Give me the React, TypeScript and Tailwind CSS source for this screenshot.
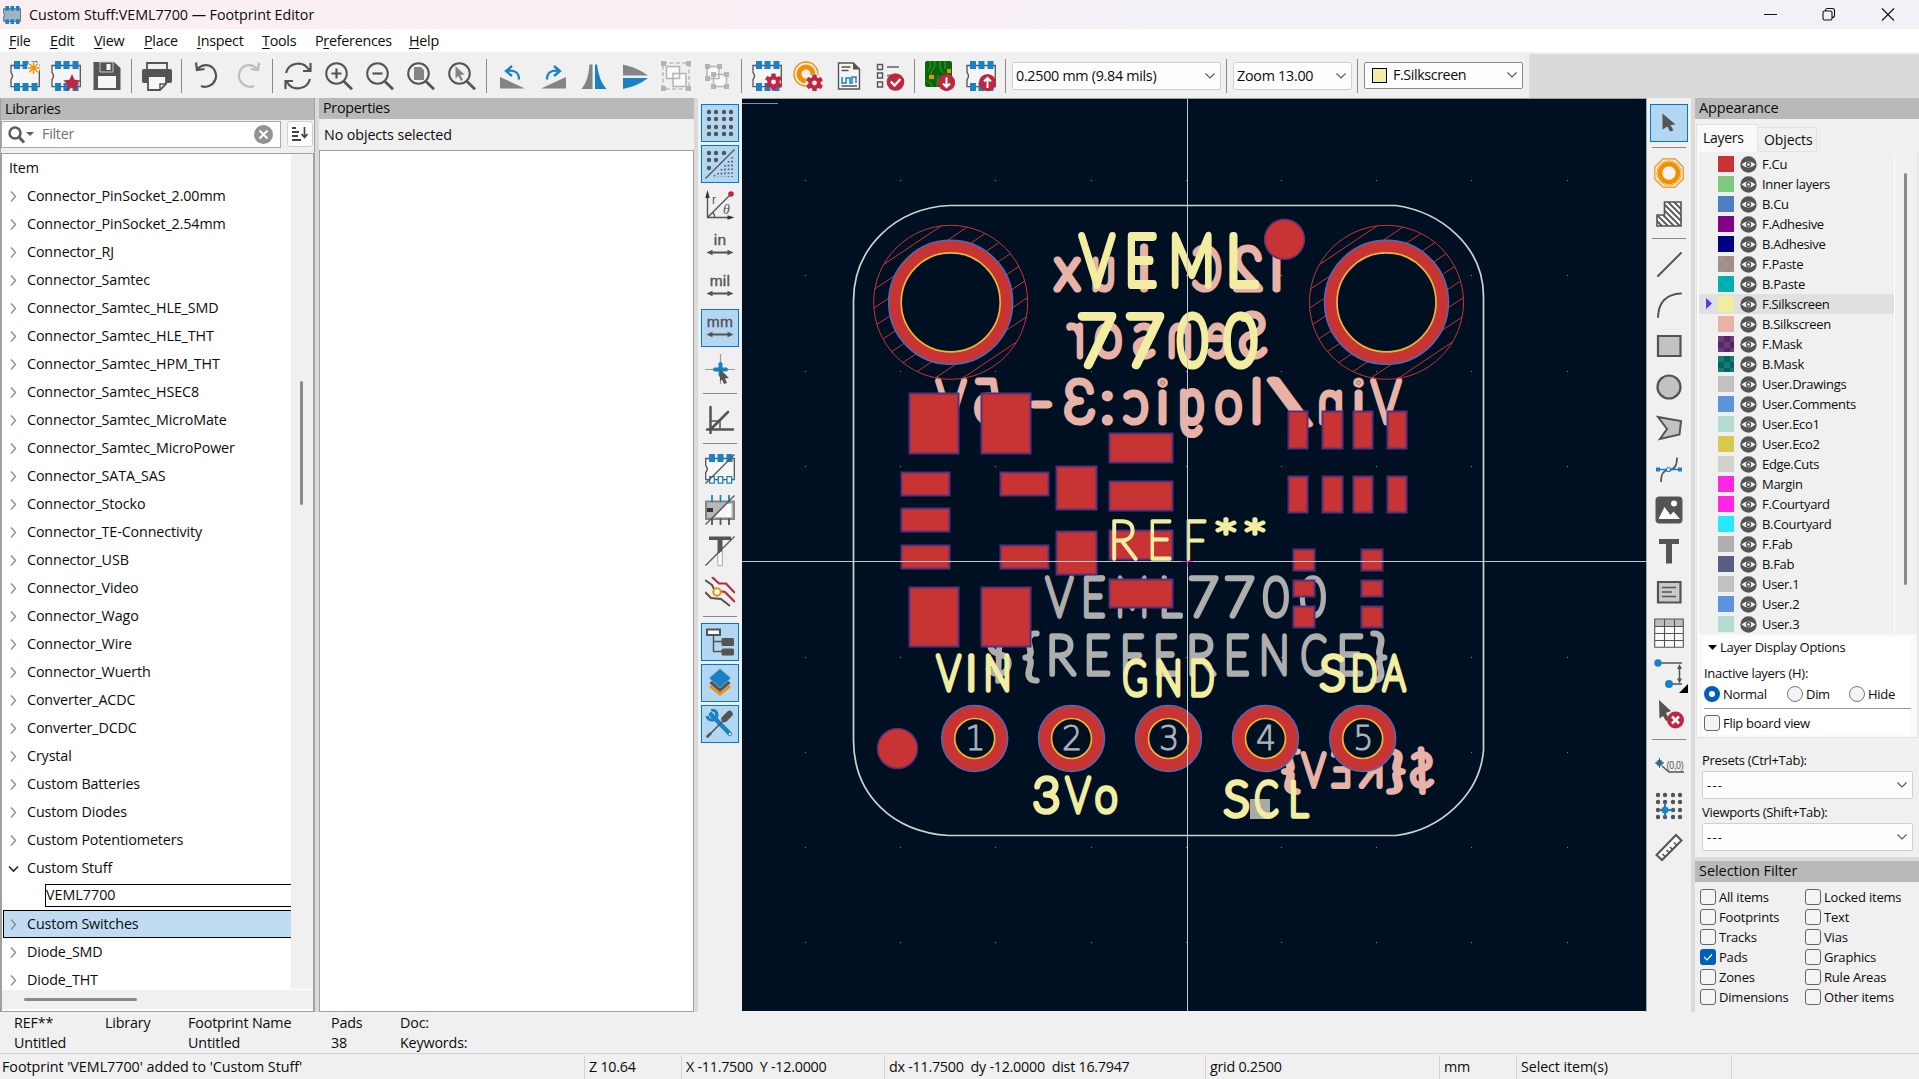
import React from 'react';

const BLUE = '#1a81c4';
const DARK = '#545454';
const GRAY = '#848484';
const RED = '#bf2641';
const ORANGE = '#f29100';

type Kids = { children?: React.ReactNode };

function Ico({ children, size = 30 }: Kids & { size?: number }) {
  return (
    <svg width={size} height={size} viewBox="0 0 30 30" fill="none" className="block shrink-0">
      {children}
    </svg>
  );
}

/* ---------- shared icon parts ---------- */

function Chip({ bottom = true, fill = '#f5f5f5' }: { bottom?: boolean; fill?: string }) {
  return (
    <>
      <path d="M1 4.5H29.3V25.7H1V18.5Q4 15 1 11.5Z" fill={fill} stroke={DARK} strokeWidth="1.3" />
      <path d="M4 0h6v8h-6zM12.5 0h6v8h-6zM21.5 0h6v8h-6z" fill={BLUE} />
      {bottom && <path d="M4 22h6v8h-6zM12.5 22h6v8h-6zM21.5 22h6v8h-6z" fill={BLUE} />}
    </>
  );
}

function Gear({ x, y }: { x: number; y: number }) {
  return (
    <g transform={`translate(${x} ${y})`}>
      {[0, 60, 120].map((a) => (
        <rect key={a} x="-2.2" y="-8.6" width="4.4" height="17.2" rx="1" fill={RED} transform={`rotate(${a})`} />
      ))}
      <circle r="6.2" fill={RED} />
      <circle r="2.4" fill="#f5f5f5" />
    </g>
  );
}

function Mag({ children }: Kids) {
  return (
    <Ico>
      <circle cx="12.5" cy="12.5" r="10.3" stroke={DARK} strokeWidth="2" />
      <path d="M20 20.5L28 28.3" stroke={DARK} strokeWidth="2.8" />
      {children}
    </Ico>
  );
}

/* ---------- top toolbar ---------- */

const Sep = () => (
  <div className="flex w-[9px] shrink-0 justify-center">
    <div className="h-[34px] w-px bg-[#8a8a8a]" />
  </div>
);
const Slot = ({ children }: Kids) => <div className="flex w-[41px] shrink-0 items-center justify-center">{children}</div>;

function Chevron() {
  return (
    <svg width="12" height="8" viewBox="0 0 12 8" fill="none" className="shrink-0">
      <path d="M1.5 1.5L6 6L10.5 1.5" stroke="#555" strokeWidth="1.1" />
    </svg>
  );
}

function TopToolbar() {
  return (
    <div className="flex h-[46px] shrink-0 bg-[#f0f0f0]">
      <div className="flex h-[46px] w-[1529px] items-center pt-[2px] pl-[4px]">
        <Slot>
          <Ico>
            <Chip />
            <circle cx="23.5" cy="7" r="6.5" fill="#f5f5f5" />
            <path d="M23.5 1v12M17.5 7h12M19.3 2.8l8.4 8.4M27.7 2.8l-8.4 8.4" stroke={ORANGE} strokeWidth="1.4" />
          </Ico>
        </Slot>
        <Slot>
          <Ico>
            <Chip />
            <path d="M21 13l2.6 5.8 6.2.6-4.7 4 1.4 6.4L21 26.500l-5.500 3.300 1.400-6.400-4.700-4 6.200-.6z" fill={RED} />
          </Ico>
        </Slot>
        <Slot>
          <Ico>
            <path d="M1.500 1H22L28.500 7V29H1.500Z" fill={DARK} />
            <path d="M8 1h13v10H8z" fill="#545454" stroke="#c8c8c8" strokeWidth="1" />
            <path d="M14.500 3h4v6h-4zM6 15h18v12H6z" fill="#f5f5f5" />
          </Ico>
        </Slot>
        <Sep />
        <Slot>
          <Ico>
            <path d="M5 2h20v7H5z" fill="#f0f0f0" stroke={DARK} strokeWidth="1.800" />
            <rect y="8" width="30" height="14" rx="2" fill={DARK} />
            <path d="M6 15h18v8L18 29H6z" fill="#f8f8f8" stroke={DARK} strokeWidth="1.800" />
            <path d="M18 29V23H24" stroke={DARK} strokeWidth="1.500" />
          </Ico>
        </Slot>
        <Sep />
        <Slot>
          <Ico>
            <path d="M4 1.500L5 9L12.500 8M5 8.500Q10 3 17 4.500A10.800 10.800 0 1 1 9 25" stroke={DARK} strokeWidth="2.200" />
          </Ico>
        </Slot>
        <Slot>
          <Ico>
            <path d="M26 1.500L25 9L17.500 8M25 8.500Q20 3 13 4.500A10.800 10.800 0 1 0 21 25" stroke="#bdbdbd" strokeWidth="2.200" />
          </Ico>
        </Slot>
        <Sep />
        <Slot>
          <Ico>
            <path d="M3 12A12.500 12.500 0 0 1 26 9M27.500 2V10H20M27 18A12.500 12.500 0 0 1 4 21M2.500 28V20H10" stroke={DARK} strokeWidth="2.200" />
          </Ico>
        </Slot>
        <Slot>
          <Mag>
            <path d="M12.500 7.500v10M7.500 12.500h10" stroke={DARK} strokeWidth="2.200" />
          </Mag>
        </Slot>
        <Slot>
          <Mag>
            <path d="M7.500 12.500h10" stroke={DARK} strokeWidth="2.200" />
          </Mag>
        </Slot>
        <Slot>
          <Mag>
            <path d="M8 6h7l3 3v10H8z" fill={GRAY} />
          </Mag>
        </Slot>
        <Slot>
          <Mag>
            <path d="M8.500 5L17.500 13.500L13.500 14L16 19L13.800 20L11.500 15L8.500 17.500Z" fill={GRAY} />
          </Mag>
        </Slot>
        <Sep />
        <Slot>
          <Ico>
            <path d="M3 16L28 27.500H3Z" fill={GRAY} />
            <path d="M15 5L9 10L15 15M9.500 10Q22 8 22 18.500" stroke={BLUE} strokeWidth="2.300" />
          </Ico>
        </Slot>
        <Slot>
          <Ico>
            <path d="M28 16L3 27.500H28Z" fill={GRAY} />
            <path d="M16 5L22 10L16 15M21.500 10Q9 8 9 18.500" stroke={BLUE} strokeWidth="2.300" />
          </Ico>
        </Slot>
        <Slot>
          <Ico>
            <path d="M13.500 3.500V28H2.500Q9.500 20 10.500 3.500Z" fill={GRAY} />
            <path d="M16 3.500V28H27.500Q20 20 18 3.500Z" fill={BLUE} />
          </Ico>
        </Slot>
        <Slot>
          <Ico>
            <path d="M3 3.500V14.500H28Q18 7 3 3.500Z" fill={GRAY} />
            <path d="M3 28V17H28Q18 25 3 28Z" fill={BLUE} />
          </Ico>
        </Slot>
        <Slot>
          <Ico>
            <path d="M2 2H28V28H2Z" stroke="#b9b9b9" strokeWidth="1.500" strokeDasharray="4 2.500" />
            <path d="M0 0h5v5h-5zM25 0h5v5h-5zM0 25h5v5h-5zM25 25h5v5h-5z" fill="#b4b4b4" />
            <path d="M5.500 5.500h13v12h-13zM12 12.500h13v13h-13z" fill="#fafafa" stroke="#b4b4b4" strokeWidth="1.500" />
          </Ico>
        </Slot>
        <Slot>
          <Ico>
            <path d="M5 5.500h12v12h-12zM11.500 13.500h13v12h-13z" fill="#fafafa" stroke="#b4b4b4" strokeWidth="1.500" />
            <path d="M3 3h5v5h-5zM15 3h5v5h-5zM3 15h5v5h-5zM9 11h5v5h-5zM22 11h5v5h-5zM9 23h5v5h-5zM22 23h5v5h-5z" fill="#b4b4b4" />
          </Ico>
        </Slot>
        <Sep />
        <Slot>
          <Ico>
            <Chip />
            <Gear x={21.500} y={21} />
          </Ico>
        </Slot>
        <Slot>
          <Ico>
            <circle cx="13" cy="13" r="12" stroke={ORANGE} strokeWidth="1.400" />
            <circle cx="13" cy="13" r="7" stroke={ORANGE} strokeWidth="5" />
            <circle cx="21.500" cy="22" r="9" fill="#f0f0f0" />
            <Gear x={21.500} y={22} />
          </Ico>
        </Slot>
        <Slot>
          <Ico>
            <path d="M4.500 2H19.500L25.500 8V28H4.500Z" fill="#f5f5f5" stroke={DARK} strokeWidth="1.400" />
            <path d="M19 2V8.500H25.500Z" fill={DARK} />
            <path d="M7.500 6h9M7.500 9.500h7M7.500 25h15.500" stroke={DARK} strokeWidth="1.300" />
            <path d="M8 16v6h4v-5h4v5h2v-6h4v6" stroke={BLUE} strokeWidth="1.500" />
          </Ico>
        </Slot>
        <Slot>
          <Ico>
            <path d="M2.500 3.500h5v5h-5zM2.500 12h5v5h-5zM2.500 21h5v5h-5z" stroke={DARK} strokeWidth="1.400" />
            <path d="M12 6h12M12 14.500h6M12 23h4" stroke={GRAY} strokeWidth="2.200" />
            <circle cx="20.500" cy="21" r="8.800" fill={RED} />
            <path d="M15.800 20.500L19.500 24.500L25.500 18" stroke="#fff" strokeWidth="2.300" />
          </Ico>
        </Slot>
        <Sep />
        <Slot>
          <Ico>
            <rect width="27" height="26" rx="2" fill="#08660c" />
            <path d="M5 0Q7 6 3 10M10 0Q10 6 7 10T9 18M15 0Q14 7 18 12M20 0L20 8M0 20Q6 20 7 26M13 14L12 26" stroke="#3c8c30" strokeWidth="1.200" />
            <path d="M4 14h5v4h-5zM22 8h4v4h-4z" fill={ORANGE} />
            <circle cx="21.500" cy="21.500" r="8.600" fill={RED} />
            <path d="M21.500 16.500V25.500M18 22.500L21.500 26L25 22.500" stroke="#fff" strokeWidth="2" />
          </Ico>
        </Slot>
        <Slot>
          <Ico>
            <Chip />
            <circle cx="21.500" cy="21.500" r="8.600" fill={RED} />
            <path d="M21.500 27V17.500M18 20.500L21.500 17L25 20.500" stroke="#fff" strokeWidth="2" />
          </Ico>
        </Slot>
        <Sep />
        <div className="ml-[2px] flex h-[28px] w-[209px] items-center justify-between rounded-[2px] border border-[#d0d0d0] bg-[#fdfdfd] pr-[4px] pl-[3px] tracking-[-0.28px]">
          0.2500 mm (9.84 mils)
          <Chevron />
        </div>
        <div className="ml-px">
          <Sep />
        </div>
        <div className="ml-[2px] flex h-[28px] w-[119px] items-center justify-between rounded-[2px] border border-[#d0d0d0] bg-[#fdfdfd] pr-[4px] pl-[3px]">
          Zoom 13.00
          <Chevron />
        </div>
        <div className="ml-px">
          <Sep />
        </div>
        <div className="mb-[2px] ml-[2px] flex h-[27px] w-[159px] items-center rounded-[2px] border border-[#8a8a8a] bg-[#fdfdfd] pr-[4px] pl-[7px]">
          <div className="mr-[6px] size-[15px] border border-black bg-[#f2eda1]" />
          <span className="flex-1 tracking-[-0.4px]">F.Silkscreen</span>
          <Chevron />
        </div>
      </div>
      <div className="mt-[2px] flex-1 bg-[#dadada]" />
    </div>
  );
}

/* ---------- side toolbars ---------- */

const HSep = () => (
  <div className="flex h-[9px] shrink-0 items-center justify-center">
    <div className="h-px w-[34px] bg-[#8a8a8a]" />
  </div>
);
function VSlot({ on, children }: Kids & { on?: boolean }) {
  return (
    <div className="flex h-[41px] shrink-0 items-center justify-center">
      <div className={on ? 'flex size-[38px] items-center justify-center border border-[#0078d7] bg-[#b3d7f3]' : 'flex size-[38px] items-center justify-center'}>
        <Ico>{children}</Ico>
      </div>
    </div>
  );
}

const GP = [4, 11, 19, 26];
function Unit({ t }: { t: string }) {
  return (
    <>
      <text x="15" y="14" textAnchor="middle" fontFamily="Liberation Sans" fontSize="15.500" letterSpacing="0.300" fill={DARK} stroke={DARK} strokeWidth="0.400">
        {t}
      </text>
      <path d="M4 21.500h22" stroke={DARK} strokeWidth="2" />
      <path d="M1.500 21.500l6-2.800v5.600zM28.500 21.500l-6-2.800v5.600z" fill={DARK} />
    </>
  );
}
const Slash = () => <path d="M0.500 29.500L29.500 0.500" stroke={DARK} strokeWidth="1.300" />;

function LeftToolbar() {
  return (
    <div className="w-[44px] shrink-0 bg-[#f0f0f0] pt-[4px]">
      <VSlot on>{GP.map((y) => GP.map((x) => <circle key={x + '-' + y} cx={x} cy={y} r="2.200" fill={DARK} />))}</VSlot>
      <VSlot on>
        {[[4, 4], [11, 4], [19, 4], [4, 11], [11, 11], [4, 19]].map(([x, y]) => (
          <circle key={x + '-' + y} cx={x} cy={y} r="2.200" fill={DARK} />
        ))}
        <path d="M27 8v20M23.500 12v16M20 16v12M16.500 20v8M13 24v4M9.500 26v2" stroke={DARK} strokeWidth="1.600" strokeDasharray="1.600 2.200" />
        <Slash />
      </VSlot>
      <VSlot>
        <path d="M2.500 28V4M2 27.500H26M2.500 27.500L25 5M7 22Q10 24 9.500 27.500" stroke={DARK} strokeWidth="1.400" />
        <path d="M2.500 0l2.200 8h-4.400zM29.500 27.500l-7-2.200v4.400z" fill="#333" />
        <circle cx="26" cy="4" r="2.800" fill={RED} />
        <text x="7" y="14" fontFamily="Liberation Sans" fontSize="12" fill={DARK}>r</text>
        <text x="18" y="23.500" fontFamily="Liberation Serif" fontStyle="italic" fontSize="14" fill={DARK}>θ</text>
      </VSlot>
      <VSlot><Unit t="in" /></VSlot>
      <VSlot><Unit t="mil" /></VSlot>
      <VSlot on><Unit t="mm" /></VSlot>
      <VSlot>
        <path d="M0 15.500H30M15.500 0V30" stroke="#9a9a9a" strokeWidth="1.200" />
        <path d="M15.500 10V21M10 15.500H21" stroke={BLUE} strokeWidth="4" strokeLinecap="round" />
        <path d="M15 15L24 24L20 24.500L22 29L19 30L17 25.500L15 27.500Z" fill={DARK} />
      </VSlot>
      <HSep />
      <VSlot>
        <path d="M5.500 3V29M2 25.500H28M5.500 25.500L23 8" stroke={DARK} strokeWidth="2.500" strokeLinecap="round" />
        <path d="M6 17H15V25" stroke={DARK} strokeWidth="1.500" />
      </VSlot>
      <HSep />
      <VSlot>
        <path d="M0.700 4.500H29.300V25.700H0.700V18.500Q4 15 0.700 11.500Z" fill="#f7f7f7" stroke={DARK} strokeWidth="1.300" />
        <path d="M4 0h6v8h-6zM12.500 0h6v8h-6zM21.500 0h6v8h-6z" fill={BLUE} />
        <path d="M4.700 22.700h4.600v6.500h-4.600zM13.200 22.700h4.600v6.500h-4.600zM22 22.700h4.600v6.500h-4.600z" fill="#fff" stroke={BLUE} strokeWidth="1.300" />
        <Slash />
      </VSlot>
      <VSlot>
        <path d="M1 6.500H29V24H1Z" fill="#b8b8b8" stroke={GRAY} strokeWidth="2" />
        <path d="M22 9H26.500V22H10Z" fill="#f8f8f8" />
        <path d="M2 13h6v4H2z" fill="#333" />
        <path d="M7 0v7M15.500 0v7M24 0v7" stroke={BLUE} strokeWidth="1.800" />
        <path d="M7 23v7M15.500 23v7M24 23v7" stroke={DARK} strokeWidth="1.800" />
        <Slash />
      </VSlot>
      <VSlot>
        <path d="M4 0.500h22v3.500h-8.500v11l-5 4.500V4H4z" fill={DARK} />
        <path d="M12.800 18v11.500h4.600V15" fill="#fafafa" stroke="#aaa" strokeWidth="1" />
        <Slash />
      </VSlot>
      <VSlot>
        <path d="M0 3L7 8L10 14L14 18" stroke={DARK} strokeWidth="2" />
        <path d="M0 15L6 21L16 22L25 29" stroke={DARK} strokeWidth="2" />
        <path d="M7 0L14 6.500H21L30 16M14 14L20 15L30 25" stroke={RED} strokeWidth="2.200" />
        <circle cx="12" cy="15" r="3.700" fill="#fff" stroke={ORANGE} strokeWidth="2" />
      </VSlot>
      <HSep />
      <VSlot on>
        <path d="M8.500 8V24.500H18M8.500 14.500H18" stroke={DARK} strokeWidth="1.500" />
        <path d="M2 2.500H15V8H2Z" fill="#fff" stroke={DARK} strokeWidth="2" />
        <rect x="16.500" y="11" width="12.500" height="8" rx="1.500" fill={DARK} />
        <rect x="16.500" y="21.500" width="12.500" height="7" rx="1.500" fill={DARK} />
      </VSlot>
      <VSlot on>
        <path d="M4 19L15 28L26 19L15 10Z" fill={ORANGE} />
        <path d="M4 15L15 24.500L26 15L15 6Z" fill={DARK} stroke="#b3d7f3" strokeWidth="0.500" />
        <path d="M4 10L15 20L26 10L15 0.500Z" fill={BLUE} stroke="#b3d7f3" strokeWidth="0.500" />
      </VSlot>
      <VSlot on>
        <path d="M6 5.500L25 25" stroke={BLUE} strokeWidth="4.500" strokeLinecap="round" />
        <path d="M6 1A5 5 0 1 1 2 7" stroke={BLUE} strokeWidth="3.200" />
        <circle cx="25" cy="25" r="1.200" fill="#fff" />
        <path d="M1.500 28.500L18 12" stroke={DARK} strokeWidth="1.600" />
        <path d="M2 28L6 24" stroke={DARK} strokeWidth="2.500" />
        <path d="M19.500 10L24.500 5" stroke={DARK} strokeWidth="6.500" strokeLinecap="round" />
      </VSlot>
    </div>
  );
}

function RightToolbar() {
  return (
    <div className="w-[45px] shrink-0 border-l border-[#a8a8a8] bg-[#f0f0f0] pt-[4px]">
      <VSlot on>
        <path d="M8.500 5.500L21.500 16.500L16.500 17L19.500 22.500L16 23.500L13.500 18.500L8.500 21.500Z" fill={DARK} />
      </VSlot>
      <HSep />
      <VSlot>
        <path d="M9 0.800h12l8.200 8.200v12L21 29.200H9L0.800 21V9Z" stroke={ORANGE} strokeWidth="1.200" />
        <circle cx="15" cy="15" r="12.200" stroke={ORANGE} strokeWidth="0.800" />
        <circle cx="15" cy="15" r="9" fill="#f4f4f4" stroke={ORANGE} strokeWidth="4.600" />
      </VSlot>
      <VSlot>
        <clipPath id="zoneClip"><path d="M10.500 3H27V27H3V16H10.500Z" /></clipPath>
        <path d="M10.500 3H27V27H3V16H10.500Z" fill="#f8f8f8" />
        <path clipPath="url(#zoneClip)" d="M8 -3L34 23M3 -2L32 27M-2 -1L28 29M-2 5L22 29M-2 11L16 29M-2 17L10 29M-2 23L4 29M13 -4L39 22" stroke={DARK} strokeWidth="1.900" />
        <path d="M10.500 3H27V27H3V16H10.500Z" stroke={DARK} strokeWidth="1.600" />
      </VSlot>
      <HSep />
      <VSlot><path d="M4 27L27 4" stroke={DARK} strokeWidth="2" strokeLinecap="round" /></VSlot>
      <VSlot><path d="M4 27Q5 4.500 27 3.500" stroke={DARK} strokeWidth="2" strokeLinecap="round" /></VSlot>
      <VSlot><path d="M4 5H26.500V25H4Z" fill="#c2c2c2" stroke={DARK} strokeWidth="2.200" /></VSlot>
      <VSlot><circle cx="15" cy="15" r="11.500" fill="#c2c2c2" stroke={DARK} strokeWidth="2.200" /></VSlot>
      <VSlot><path d="M4 4L27 8L25.500 21.500L6 26L13 16Z" fill="#c2c2c2" stroke={DARK} strokeWidth="2" /></VSlot>
      <VSlot>
        <path d="M7 28Q7 16 15 16T23 3.500" stroke={DARK} strokeWidth="1.700" />
        <path d="M3 15.500H27" stroke={BLUE} strokeWidth="1.500" />
        <path d="M2 13.500h4v4h-4zM24 13.500h4v4h-4z" fill={BLUE} />
        <circle cx="14.500" cy="15.500" r="2" fill="#fff" stroke={BLUE} strokeWidth="1.200" />
      </VSlot>
      <VSlot>
        <rect x="1.500" y="1.500" width="27" height="27" rx="4" fill={DARK} />
        <path d="M4.500 24L10.500 12L16.500 20L19.500 16.500L26 24Z" fill="#fff" />
        <circle cx="20" cy="8.500" r="3" fill="#fff" />
      </VSlot>
      <VSlot><path d="M5 3h20v5h-7v19.500h-6V8H5z" fill={DARK} /></VSlot>
      <VSlot>
        <path d="M4 5H26.500V25.500H4Z" fill="#c8c8c8" stroke={DARK} strokeWidth="2.200" />
        <path d="M8 10.500h14M8 15h10M8 19.500h14" stroke={DARK} strokeWidth="1.500" />
      </VSlot>
      <VSlot>
        <path d="M0.700 1h28.600v28H0.700z" fill="#fafafa" />
        <path d="M0.700 1h28.600v7.500H0.700z" fill="#bdbdbd" />
        <path d="M0.700 1h28.600v28.300H0.700zM0.700 15.500H29M0.700 8.500H29M0.700 22.500H29M10.500 1V29M20.500 1V29" stroke={DARK} strokeWidth="1.100" />
      </VSlot>
      <div className="relative">
        <VSlot>
          <path d="M4 4H28M15 25H28" stroke={DARK} strokeWidth="1.500" />
          <path d="M25.500 8V22" stroke={DARK} strokeWidth="1.500" />
          <path d="M25.500 5l2.500 5h-5zM25.500 24.500l2.500-5h-5z" fill={DARK} />
          <circle cx="4" cy="4" r="3.700" fill={BLUE} />
          <circle cx="15" cy="25" r="4" fill={BLUE} />
        </VSlot>
        <svg width="9" height="9" className="absolute right-[3px] bottom-[1px]"><path d="M9 0V9H0Z" fill="#000" /></svg>
      </div>
      <VSlot>
        <path d="M5 0L17 11L12 13L15 19L12 21L9 16L5.500 18.500Z" fill={DARK} />
        <circle cx="21.500" cy="20" r="8.500" fill={RED} />
        <path d="M18 16.500L25 23.500M25 16.500L18 23.500" stroke="#fff" strokeWidth="2.500" />
      </VSlot>
      <HSep />
      <VSlot>
        <circle cx="5.500" cy="13" r="2.800" fill={BLUE} stroke={BLUE} />
        <path d="M5.500 8V18M1 13H10" stroke={DARK} strokeWidth="1" />
        <path d="M8 16L15 22H30" stroke={DARK} strokeWidth="1.500" />
        <text x="12.500" y="18.500" fontFamily="Liberation Sans" fontSize="10" textLength="17" lengthAdjust="spacingAndGlyphs" fill={DARK}>(0,0)</text>
      </VSlot>
      <VSlot>
        {GP.map((y) => GP.map((x) => <circle key={x + '-' + y} cx={x} cy={y} r="2.200" fill={DARK} />))}
        <path d="M11 12V26M4.500 19H19" stroke={BLUE} strokeWidth="2" />
        <circle cx="11" cy="19" r="3.500" fill={BLUE} />
      </VSlot>
      <VSlot>
        <path d="M2.500 23L22 3L27.500 8.500L8 28Z" fill="#fafafa" stroke={DARK} strokeWidth="2" />
        <path d="M11 24.500L8.500 22M14.500 20L12.500 18M18.500 17.500L16 15M22.500 13L20 10.500" stroke={DARK} strokeWidth="1.600" />
      </VSlot>
    </div>
  );
}

/* ---------- libraries ---------- */

const LIBS = [
  'Connector_PinSocket_2.00mm', 'Connector_PinSocket_2.54mm', 'Connector_RJ', 'Connector_Samtec', 'Connector_Samtec_HLE_SMD',
  'Connector_Samtec_HLE_THT', 'Connector_Samtec_HPM_THT', 'Connector_Samtec_HSEC8', 'Connector_Samtec_MicroMate',
  'Connector_Samtec_MicroPower', 'Connector_SATA_SAS', 'Connector_Stocko', 'Connector_TE-Connectivity', 'Connector_USB',
  'Connector_Video', 'Connector_Wago', 'Connector_Wire', 'Connector_Wuerth', 'Converter_ACDC', 'Converter_DCDC', 'Crystal',
  'Custom Batteries', 'Custom Diodes', 'Custom Potentiometers', 'Custom Stuff', 'VEML7700', 'Custom Switches', 'Diode_SMD', 'Diode_THT',
];

function LibRow({ name }: { name: string }) {
  if (name === 'VEML7700')
    return (
      <div className="flex h-[28px] shrink-0 items-center pb-px pl-[43px]">
        <div className="flex h-[23px] flex-1 items-center border border-r-0 border-black tracking-[0px]">{name}</div>
      </div>
    );
  const open = name === 'Custom Stuff';
  const sel = name === 'Custom Switches';
  return (
    <div className={sel ? 'ml-px flex h-[28px] shrink-0 items-center border border-r-0 border-black bg-[#bfdcf2] pl-[4px]' : 'flex h-[28px] shrink-0 items-center pl-[6px]'}>
      <svg width="11" height="11" viewBox="0 0 11 11" fill="none" className="mr-[8px]">
        {open ? <path d="M1 3.500L5.500 8L10 3.500" stroke="#222" strokeWidth="1.600" /> : <path d="M3 0.500L7.500 5.500L3 10.500" stroke="#8a8a8a" strokeWidth="1.300" />}
      </svg>
      {name}
    </div>
  );
}

function Libraries() {
  return (
    <div className="flex w-[315px] shrink-0 flex-col border-x border-[#a0a0a0] bg-[#f0f0f0]">
      <div className="flex h-[22px] shrink-0 items-center bg-[#b9b9b9] pl-[4px]">Libraries</div>
      <div className="flex h-[33px] shrink-0 pt-px">
        <div className="flex h-[27px] w-[280px] items-center border border-[#a8a8a8] bg-white pr-[7px] pl-[6px]">
          <svg width="28" height="20" viewBox="0 0 28 20" fill="none">
            <circle cx="7" cy="8" r="5.500" stroke="#5c5c5c" strokeWidth="2.500" />
            <path d="M11 12L16 17.500" stroke="#5c5c5c" strokeWidth="3" />
            <path d="M18 7h8l-4 4z" fill="#5c5c5c" />
          </svg>
          <span className="ml-[6px] flex-1 text-[#707070]">Filter</span>
          <svg width="19" height="19" viewBox="0 0 19 19">
            <circle cx="9.500" cy="9.500" r="9.500" fill="#929292" />
            <path d="M5.500 5.500L13.500 13.500M13.500 5.500L5.500 13.500" stroke="#fff" strokeWidth="2" />
          </svg>
        </div>
        <div className="ml-[6px] flex size-[26px] items-center justify-center rounded-[3px] border border-[#cfcfcf] bg-[#fdfdfd]">
          <svg width="16" height="16" viewBox="0 0 16 16" fill="none">
            <path d="M0 2h4M0 6h7M0 10h6M0 14h9" stroke="#444" strokeWidth="2" />
            <path d="M12.500 1V11M9.500 8L12.500 11.500L15.500 8" stroke="#444" strokeWidth="1.700" />
          </svg>
        </div>
      </div>
      <div className="flex min-h-0 flex-1 flex-col border border-[#a0a0a0] bg-white">
        <div className="flex min-h-0 flex-1">
          <div className="flex w-[289px] flex-col overflow-hidden tracking-[-0.12px]">
            <div className="flex h-[28px] shrink-0 items-center pt-px pl-[7px]">Item</div>
            {LIBS.map((n) => <LibRow key={n} name={n} />)}
          </div>
          <div className="flex-1 bg-[#f0f0f0] pt-[227px] pl-[9px]">
            <div className="h-[124px] w-[3px] rounded bg-[#8a8a8a]" />
          </div>
        </div>
        <div className="mt-px mb-[2px] flex h-[19px] shrink-0 items-center bg-[#f0f0f0] pl-[22px]">
          <div className="h-[3px] w-[113px] rounded bg-[#8a8a8a]" />
        </div>
      </div>
    </div>
  );
}

function Properties() {
  return (
    <div className="flex w-[375px] shrink-0 flex-col bg-[#f0f0f0]">
      <div className="flex h-[21px] shrink-0 items-center bg-[#b9b9b9] pl-[4px]">Properties</div>
      <div className="flex h-[31px] shrink-0 items-center pt-[2px] pl-[5px] tracking-[-0.1px]">No objects selected</div>
      <div className="flex-1 border border-[#a0a0a0] bg-white" />
    </div>
  );
}

/* ---------- board canvas ---------- */

let probe: CanvasRenderingContext2D | null = null;
const face = (ch: string) => (ch === 'g' ? 'Roboto' : 'Lato');
function ink(ch: string, size: number) {
  if (!probe) probe = document.createElement('canvas').getContext('2d');
  probe!.font = `100 ${size}px ${face(ch)}`;
  const m = probe!.measureText(ch);
  return { l: -m.actualBoundingBoxLeft, r: m.actualBoundingBoxRight, a: m.actualBoundingBoxAscent };
}

type Cell = [string, number, number];

/* A line of board lettering; each character is fitted between its own left and right edge. */
function Lettering({ cells, top, bottom, w, color, mirror }: { cells: Cell[]; top: number; bottom: number; w: number; color: string; mirror?: boolean }) {
  const capH = bottom - top - w;
  const size = (capH / ink('H', 100).a) * 100;
  return (
    <>
      {cells.map(([ch, x0, x1], i) => {
        const b = ink(ch, size);
        const narrow = 'Iil:'.includes(ch);
        const s = narrow ? 1 : Math.max(0.3, (x1 - x0 - w) / (b.r - b.l));
        const sx = mirror ? -s : s;
        const tx = (x0 + x1) / 2 - (sx * (b.l + b.r)) / 2;
        return (
          <text
            key={i}
            transform={`matrix(${sx} 0 0 1 ${tx} ${bottom - w / 2})`}
            fontFamily={face(ch)}
            fontWeight="100"
            fontSize={size}
            fill={color}
            stroke={color}
            strokeWidth={w * 1.03}
            strokeLinejoin="round"
            strokeLinecap="round"
          >
            {ch}
          </text>
        );
      })}
    </>
  );
}

const YEL = '#f2eda1';
const PINK = '#e8b2a7';
const FAB = '#aeaeae';

const PADS: [number, number, number, number][] = [
  [909, 393, 50, 61], [981, 393, 50, 61], [901, 472, 49, 24], [1000, 472, 49, 24], [1056, 466, 41, 44],
  [1109, 433, 64, 30], [1109, 481, 64, 30], [901, 508, 49, 24], [901, 545, 49, 24], [1000, 545, 49, 24],
  [1056, 531, 41, 44], [1109, 530, 64, 30], [1109, 579, 64, 29], [909, 587, 50, 60], [981, 587, 50, 60],
  [1293, 549, 22, 22], [1293, 580, 22, 17], [1293, 606, 22, 22], [1361, 549, 22, 22], [1361, 580, 22, 17], [1361, 606, 22, 22],
  [1288, 411, 20, 38], [1322, 411, 21, 38], [1353, 411, 20, 38], [1387, 411, 20, 38],
  [1288, 476, 20, 37], [1322, 476, 21, 37], [1353, 476, 20, 37], [1387, 476, 20, 37],
];

function Mount({ cx, id }: { cx: number; id: string }) {
  const cy = 302.300;
  const lines: number[] = [];
  for (let k = -6; k <= 6; k++) lines.push(-8.700 + k * 18.500);
  return (
    <g transform={`translate(${cx} ${cy})`}>
      <clipPath id={id}><path clipRule="evenodd" d="M-77 0A77 77 0 1 0 77 0A77 77 0 1 0 -77 0M-62 0A62 62 0 1 0 62 0A62 62 0 1 0 -62 0" /></clipPath>
      <circle r="77" fill="none" stroke="#c83434" strokeWidth="1" />
      <g clipPath={`url(#${id})`} stroke="#c83434" strokeWidth="1">
        {lines.map((c) => <path key={c} d={`M-100 ${c + 67}L100 ${c - 67}`} />)}
      </g>
      <circle r="62" fill="#c83434" stroke="#4d6cb8" strokeWidth="1.500" />
      <circle r="49.500" fill="#001023" stroke="#eab92c" strokeWidth="1.700" />
    </g>
  );
}

function Board() {
  const dots: [number, number][] = [];
  for (let i = 0; i < 9; i++) for (let j = 0; j < 9; j++) dots.push([805 + Math.round(i * 95.200), 180 + Math.round(j * 95.300)]);
  return (
    <svg width="904" height="912" viewBox="742 99 904 912" className="block shrink-0 bg-[#001023]">
      <path d="M742 103.500H778" stroke="#8a9098" />
      {dots.map(([x, y]) => <rect key={x + '-' + y} x={x} y={y} width="1" height="1" fill="#7d8590" />)}
      <Lettering color={PINK} w={7} top={244} bottom={292} mirror cells={[['I', 1273, 1280], ['2', 1232, 1264], ['C', 1191, 1223], ['l', 1139, 1149], ['u', 1091, 1115], ['x', 1053, 1082]]} />
      <Lettering color={PINK} w={7} top={310} bottom={359} mirror cells={[['S', 1238, 1268], ['e', 1205, 1230], ['n', 1167, 1192], ['s', 1132, 1156], ['o', 1094, 1123], ['r', 1065, 1084]]} />
      <Lettering color={PINK} w={7} top={377} bottom={425} mirror cells={[['V', 1369, 1403], ['i', 1353, 1364], ['n', 1318, 1343], ['/', 1269, 1311], ['l', 1251, 1262], ['o', 1214, 1243], ['g', 1179, 1205], ['i', 1157, 1168], ['c', 1122, 1149], [':', 1102, 1113], ['3', 1063, 1096], ['-', 1030, 1052], ['5', 973, 1002], ['V', 934, 968]]} />
      <Lettering color={PINK} w={6} top={751} bottom={789} mirror cells={[['$', 1409, 1435], ['{', 1386, 1405], ['R', 1358, 1383], ['E', 1330, 1351], ['V', 1300, 1328], ['}', 1282, 1301]]} />
      <Lettering color={FAB} w={5.500} top={575} bottom={619} cells={[['V', 1044, 1075], ['E', 1083, 1106], ['M', 1117, 1148], ['L', 1161, 1184], ['7', 1188, 1219], ['7', 1224, 1255], ['0', 1262, 1290], ['0', 1299, 1327]]} />
      <Lettering color={FAB} w={5.500} top={633} bottom={677} cells={[['$', 985, 1012], ['{', 1022, 1040], ['R', 1049, 1077], ['E', 1086, 1111], ['F', 1122, 1145], ['E', 1155, 1178], ['R', 1189, 1217], ['E', 1226, 1250], ['N', 1261, 1288], ['C', 1300, 1328], ['E', 1339, 1364], ['}', 1370, 1388]]} />
      <path d="M950 205.500H1396C1440 212 1483 245 1483.500 296V750C1480 795 1440 830 1396 835.500H949C893 832 853.500 795 853.500 740V301C853.500 248 895 208 950 205.500Z" fill="none" stroke="#d0d2cd" strokeWidth="1.700" />
      {PADS.map(([x, y, w, h], i) => <rect key={i} x={x + 0.500} y={y + 0.500} width={w - 1} height={h - 1} fill="#c83434" stroke="#57307c" strokeWidth="2" />)}
      <circle cx="1284.500" cy="239.300" r="20" fill="#c83434" stroke="#57307c" strokeWidth="1.500" />
      <circle cx="897.500" cy="748.500" r="20" fill="#c83434" stroke="#57307c" strokeWidth="1.500" />
      <Mount cx={950.700} id="ringA" />
      <Mount cx={1386.500} id="ringB" />
      {[974.700, 1071.500, 1168.500, 1265.500, 1362.700].map((x, i) => (
        <g key={x}>
          <circle cx={x} cy="738.500" r="33" fill="#c83434" stroke="#4d6cb8" strokeWidth="1.500" />
          <circle cx={x} cy="738.500" r="20" fill="#001023" stroke="#eab92c" strokeWidth="1.700" />
          <text x={x + 0.500} y="749.500" textAnchor="middle" fontFamily="DejaVu Sans" fontWeight="200" fontSize="34" textLength="20" lengthAdjust="spacingAndGlyphs" fill="#aeb3bb" stroke="#aeb3bb" strokeWidth="1">{i + 1}</text>
        </g>
      ))}
      <rect x="1250" y="799" width="20" height="20" fill="#a9a9a9" />
      <Lettering color={YEL} w={8} top={232} bottom={289} cells={[['V', 1077, 1117], ['E', 1127, 1158], ['M', 1171, 1213], ['L', 1229, 1260]]} />
      <Lettering color={YEL} w={8} top={312} bottom={369} cells={[['7', 1077, 1117], ['7', 1125, 1165], ['0', 1175, 1210], ['0', 1222, 1259]]} />
      <Lettering color={YEL} w={3.500} top={519} bottom={561} cells={[['R', 1112, 1138], ['E', 1150, 1172], ['F', 1186, 1207], ['*', 1215, 1237], ['*', 1244, 1266]]} />
      <Lettering color={YEL} w={5.500} top={654} bottom={693} cells={[['V', 935, 963], ['I', 969, 974], ['N', 985, 1010]]} />
      <Lettering color={YEL} w={5.500} top={659} bottom={698} cells={[['G', 1122, 1148], ['N', 1156, 1181], ['D', 1190, 1215]]} />
      <Lettering color={YEL} w={5.500} top={654} bottom={693} cells={[['S', 1319, 1345], ['D', 1352, 1378], ['A', 1381, 1408]]} />
      <Lettering color={YEL} w={5.500} top={775} bottom={815} cells={[['3', 1033, 1060], ['V', 1064, 1092], ['o', 1094, 1118]]} />
      <Lettering color={YEL} w={5.500} top={780} bottom={819} cells={[['S', 1223, 1249], ['C', 1254, 1280], ['L', 1290, 1310]]} />
      <path d="M1187.500 99V1011M742 561.500H1646" stroke="#c4c6ca" strokeWidth="1" />
      <path d="M1182 561.500H1193M1187.500 561V567" stroke="#ff26e2" strokeWidth="1" />
    </svg>
  );
}

/* ---------- appearance ---------- */

const LAYERS: [string, string, string?][] = [
  ['F.Cu', '#c83434'], ['Inner layers', '#7fc87f'], ['B.Cu', '#4d7fc4'], ['F.Adhesive', '#840084'], ['B.Adhesive', '#000084'],
  ['F.Paste', '#a5928b', '#a08d86'], ['B.Paste', '#00b3b3', '#05aaaa'], ['F.Silkscreen', '#f2eda1'], ['B.Silkscreen', '#e8b2a7'],
  ['F.Mask', '#6b3b7c', '#552662'], ['B.Mask', '#187a72', '#02645c'], ['User.Drawings', '#c2c2c2'], ['User.Comments', '#5994dc'],
  ['User.Eco1', '#b4dbd2'], ['User.Eco2', '#d8c852'], ['Edge.Cuts', '#d0d2cd'], ['Margin', '#ff26e2'], ['F.Courtyard', '#ff26e2'],
  ['B.Courtyard', '#26e9ff'], ['F.Fab', '#afafaf'], ['B.Fab', '#585d84'], ['User.1', '#c2c2c2'], ['User.2', '#5994dc'], ['User.3', '#b4dbd2'],
];

function LayerRow({ name, c, c2 }: { name: string; c: string; c2?: string }) {
  const sel = name === 'F.Silkscreen';
  return (
    <div className={sel ? 'flex h-[20px] shrink-0 items-center bg-[#e0e0e0]' : 'flex h-[20px] shrink-0 items-center'}>
      <svg width="19" height="14" className="shrink-0">{sel && <path d="M7 1L13 6.500L7 12Z" fill="#4040ff" />}</svg>
      <svg width="16" height="16" className="mb-px shrink-0">
        <rect width="16" height="16" fill={c} />
        {c2 && <path d="M6 0h6v6h-6zM0 6h6v6h-6zM12 6h4v6h-4zM6 12h6v4h-6z" fill={c2} />}
      </svg>
      <svg width="17" height="17" viewBox="0 0 17 17" fill="none" className="mr-[5px] ml-[6px] shrink-0">
        <circle cx="8.500" cy="8.500" r="8.200" fill={DARK} />
        <path d="M1.500 8.500Q8.500 2.500 15.500 8.500Q8.500 14.500 1.500 8.500Z" fill="#f0f0f0" />
        <circle cx="8.500" cy="8.500" r="2" stroke={DARK} strokeWidth="1.300" />
      </svg>
      <span>{name}</span>
    </div>
  );
}

function Check({ label, on }: { label: string; on?: boolean }) {
  return (
    <div className="flex h-[20px] items-center gap-[3px]">
      <div className={on ? 'flex size-[16px] items-center justify-center rounded-[3px] bg-[#005fb8]' : 'size-[16px] rounded-[3px] border border-[#666] bg-[#f4f4f4]'}>
        {on && <svg width="10" height="8" viewBox="0 0 10 8" fill="none"><path d="M1 4L4 7L9 1.500" stroke="#fff" strokeWidth="1.200" /></svg>}
      </div>
      <span>{label}</span>
    </div>
  );
}

function Radio({ label, on }: { label: string; on?: boolean }) {
  return (
    <div className="flex items-center gap-[3px]">
      <div className={on ? 'size-[16px] rounded-full border-[5px] border-[#005fb8] bg-white' : 'size-[16px] rounded-full border border-[#777] bg-[#f4f4f4]'} />
      <span>{label}</span>
    </div>
  );
}

function Combo() {
  return (
    <div className="flex h-[28px] w-[211px] shrink-0 items-center justify-between rounded-[2px] border border-[#d0d0d0] bg-[#fdfdfd] pr-[4px] pl-[4px] tracking-[1.2px]">
      ---
      <Chevron />
    </div>
  );
}

function Appearance() {
  return (
    <div className="flex w-[224px] shrink-0 flex-col bg-[#f0f0f0] text-[13px] tracking-[-0.3px]">
      <div className="flex h-[21px] shrink-0 items-center bg-[#b9b9b9] pl-[4px] text-[14.5px] tracking-[-0.15px]">Appearance</div>
      <div className="flex h-[33px] shrink-0 items-end pl-px">
        <div className="flex h-[28px] w-[62px] items-center border border-b-0 border-[#e2e2e2] bg-[#f9f9f9] pb-[2px] pl-[6px] text-[14px]">Layers</div>
        <div className="flex h-[25px] w-[59px] items-center border border-l-0 border-[#e2e2e2] pl-[6px] text-[14px] tracking-[-0.1px]">Objects</div>
      </div>
      <div className="ml-px flex w-[222px] shrink-0 flex-col border border-t-0 border-[#e2e2e2] bg-[#f9f9f9] pl-[2px]">
        <div className="flex h-[482px] bg-[#f0f0f0] pt-[2px]">
          <div className="w-[196px] border-r border-white">
            {LAYERS.map(([n, c, c2]) => <LayerRow key={n} name={n} c={c} c2={c2} />)}
          </div>
          <div className="pt-[19px] pl-[9px]">
            <div className="h-[412px] w-[3px] rounded bg-[#8a8a8a]" />
          </div>
        </div>
        <div className="mt-[3px] mb-[2px] ml-[5px] flex h-[98px] w-[207px] flex-col bg-white">
          <div className="flex h-[20px] items-center">
            <svg width="16" height="8" className="mt-px"><path d="M4 1H13L8.500 6Z" fill="#000" /></svg>
            Layer Display Options
          </div>
          <div className="mt-[6px] flex h-[21px] items-center">Inactive layers (H):</div>
          <div className="flex h-[20px] items-center">
            <div className="w-[83px]"><Radio label="Normal" on /></div>
            <div className="w-[62px]"><Radio label="Dim" /></div>
            <Radio label="Hide" />
          </div>
          <div className="mt-[4px] mb-[4px] h-px shrink-0 bg-[#9a9a9a]" />
          <Check label="Flip board view" />
        </div>
      </div>
      <div className="flex shrink-0 flex-col pl-[7px]">
        <div className="mt-[12px] flex h-[21px] items-center">Presets (Ctrl+Tab):</div>
        <Combo />
        <div className="mt-[3px] flex h-[21px] items-center">Viewports (Shift+Tab):</div>
        <Combo />
      </div>
      <div className="mt-[6px] h-[4px] shrink-0 bg-[#dadada]" />
      <div className="flex h-[21px] shrink-0 items-center bg-[#b9b9b9] pl-[4px] text-[14.5px] tracking-[-0.05px]">Selection Filter</div>
      <div className="mt-[5px] grid grid-cols-[105px_1fr] pl-[5px] tracking-[-0.2px]">
        <Check label="All items" /><Check label="Locked items" />
        <Check label="Footprints" /><Check label="Text" />
        <Check label="Tracks" /><Check label="Vias" />
        <Check label="Pads" on /><Check label="Graphics" />
        <Check label="Zones" /><Check label="Rule Areas" />
        <Check label="Dimensions" /><Check label="Other items" />
      </div>
    </div>
  );
}

/* ---------- chrome ---------- */

function TitleBar() {
  return (
    <div className="flex h-[29px] shrink-0 items-center bg-linear-to-r from-[#faeff0] via-[#f9eef6] via-50% to-[#f2f1f8] to-62% pl-[3px]">
      <Ico size={18}><Chip fill="#9fb4c6" /></Ico>
      <span className="ml-[8px] flex-1 pt-px tracking-[-0.04px]">Custom Stuff:VEML7700 — Footprint Editor</span>
      <svg width="160" height="29" viewBox="0 0 160 29" fill="none" stroke="#111" strokeWidth="1.100">
        <path d="M5 14.500H18M123 8.500L135 20.500M135 8.500L123 20.500" />
        <rect x="64" y="11" width="9" height="9" rx="1.500" />
        <path d="M66.500 11V10.500Q66.500 8.500 68.500 8.500H73.500Q75.500 8.500 75.500 10.500V15.500Q75.500 17.500 73 17.500" />
      </svg>
    </div>
  );
}

const MENU: [string, string, string, string][] = [
  ['', 'F', 'ile', 'w-[41px]'], ['', 'E', 'dit', 'w-[44px]'], ['', 'V', 'iew', 'w-[50px]'], ['', 'P', 'lace', 'w-[53px]'],
  ['', 'I', 'nspect', 'w-[65px]'], ['', 'T', 'ools', 'w-[53px]'], ['P', 'r', 'eferences', 'w-[94px]'], ['', 'H', 'elp', 'w-[40px]'],
];

const STATUS: [string, string][] = [
  ["Footprint 'VEML7700' added to 'Custom Stuff'", 'w-[585px] pl-[2px] tracking-[-0.02px]'],
  ['Z 10.64', 'w-[97px] pl-[4px]'],
  ['X -11.7500  Y -12.0000', 'w-[203px] pl-[4px]'],
  ['dx -11.7500  dy -12.0000  dist 16.7947', 'w-[321px] pl-[4px]'],
  ['grid 0.2500', 'w-[234px] pl-[4px]'],
  ['mm', 'w-[77px] pl-[4px]'],
  ['Select item(s)', 'w-[215px] pl-[4px] tracking-[-0.1px]'],
];

const INFO: [string, string, string][] = [
  ['REF**', 'Untitled', 'w-[91px]'], ['Library', '', 'w-[83px]'], ['Footprint Name', 'Untitled', 'w-[143px]'],
  ['Pads', '38', 'w-[69px]'], ['Doc:', 'Keywords:', 'w-[120px]'],
];

export default function App() {
  return (
    <div className="flex h-[1079px] w-[1919px] flex-col overflow-hidden bg-[#f0f0f0] font-['Open_Sans',sans-serif] text-[14.3px] leading-none tracking-[-0.25px] whitespace-pre text-[#0c0c0c]">
      <TitleBar />
      <div className="flex h-[23px] shrink-0 items-center bg-white pt-[2px] pl-[9px]">
        {MENU.map(([a, u, b, w]) => (
          <div key={u + b} className={w}>
            {a}<span className="underline underline-offset-2">{u}</span>{b}
          </div>
        ))}
      </div>
      <TopToolbar />
      <div className="flex h-[914px] shrink-0">
        <Libraries />
        <div className="w-[4px] shrink-0 bg-[#dadada]" />
        <Properties />
        <div className="w-[4px] shrink-0 bg-[#dadada]" />
        <LeftToolbar />
        <div className="shrink-0 border-t border-[#a0a0a0] bg-[#f0f0f0]"><Board /></div>
        <RightToolbar />
        <div className="w-[4px] shrink-0 bg-[#dadada]" />
        <Appearance />
      </div>
      <div className="flex h-[41px] shrink-0 pl-[14px] tracking-[-0.15px]">
        {INFO.map(([a, b, w]) => (
          <div key={a} className={w}>
            <div className="flex h-[21px] items-center pt-px">{a}</div>
            <div className="flex h-[20px] items-center">{b}</div>
          </div>
        ))}
      </div>
      <div className="flex flex-1 border-t border-[#d4d4d4] pt-px">
        {STATUS.map(([t, w]) => (
          <div key={t} className={w + ' flex shrink-0 items-center border-r border-[#d4d4d4]'}>{t}</div>
        ))}
      </div>
    </div>
  );
}
